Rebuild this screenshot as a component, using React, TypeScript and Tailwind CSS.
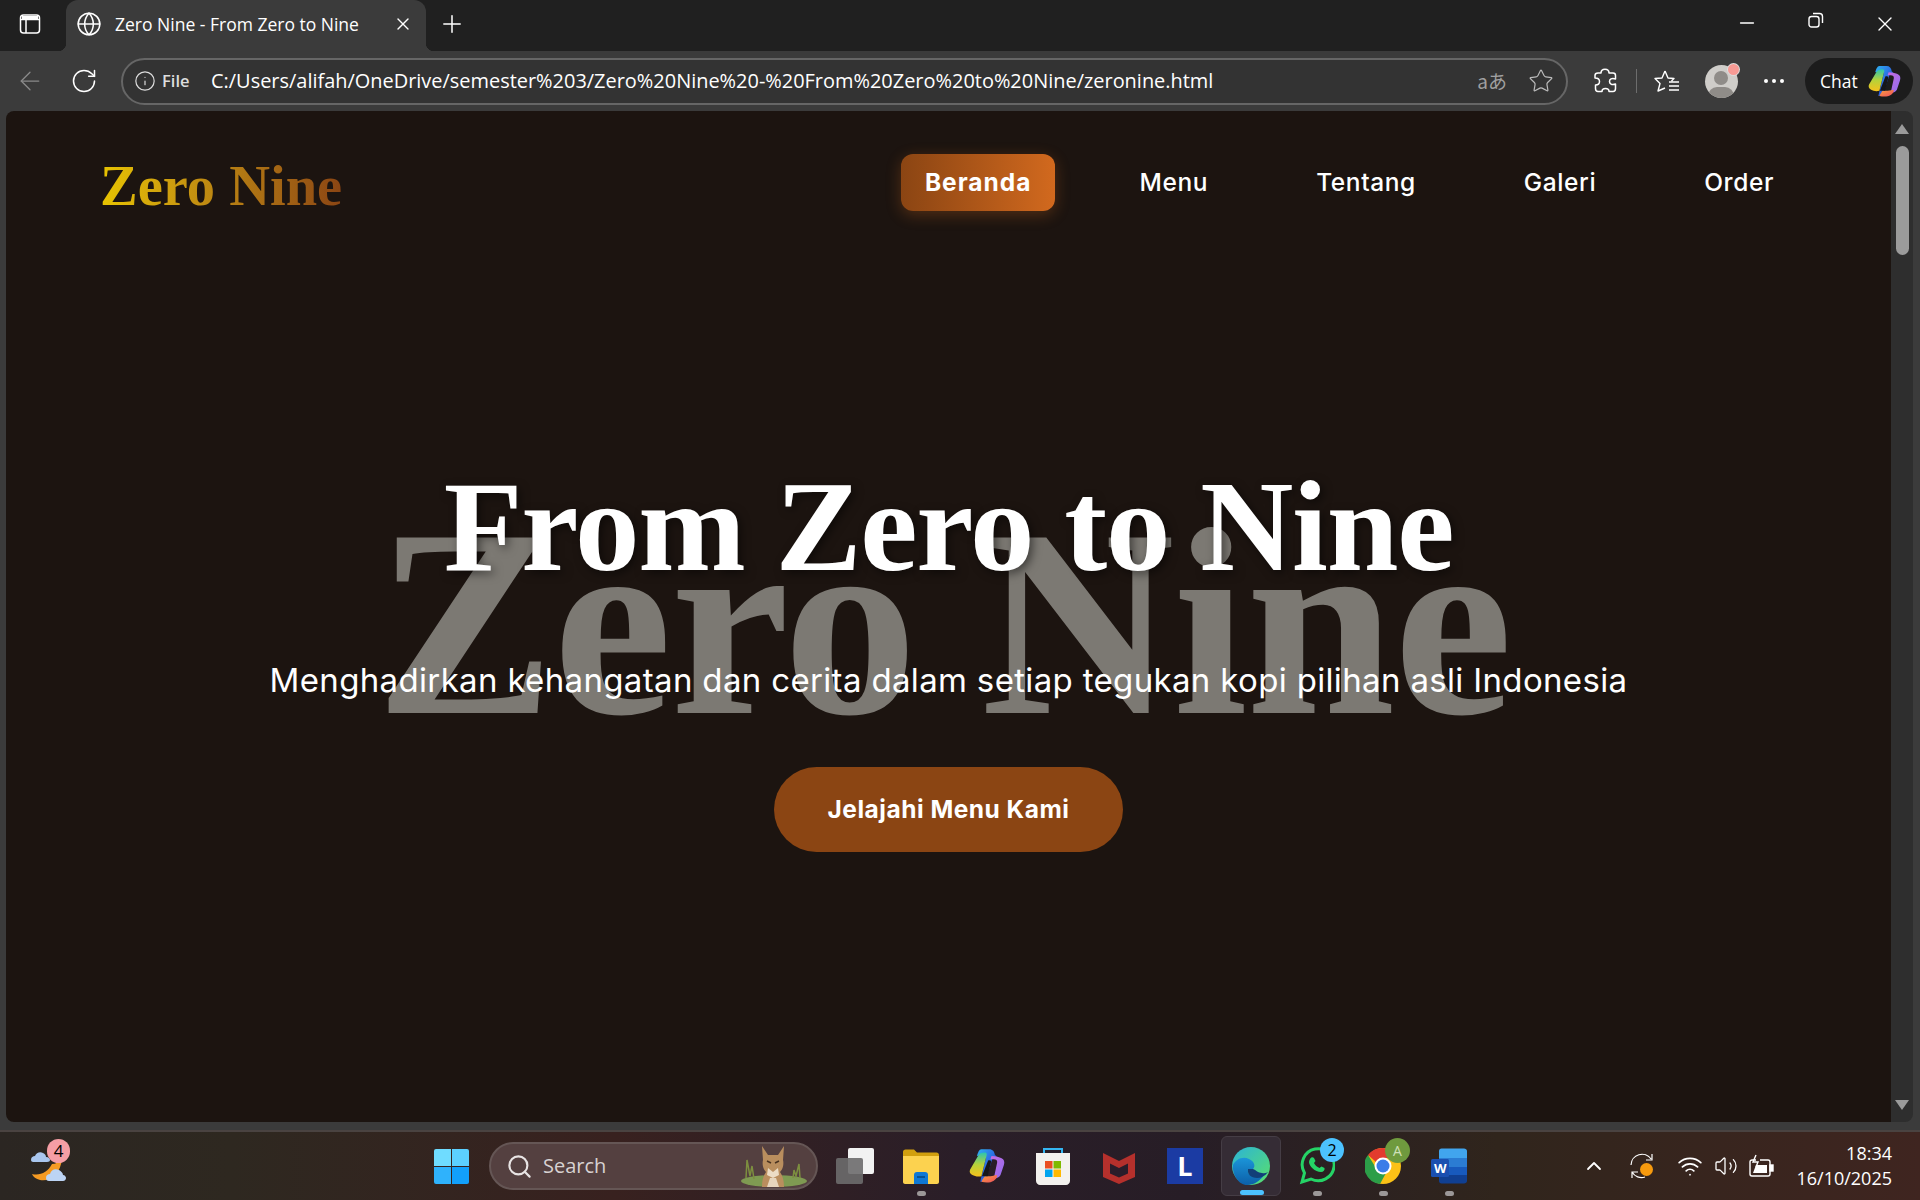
import { ArrowLeft, ChevronUp, Globe, Info, Minus, Plus, RotateCw, Search, Star, Volume2, Wifi, X } from 'lucide-react';

const ui = { fontFamily: '"Open Sans", "Noto Sans", sans-serif' };

function CopilotIcon({ size }: { size: number }) {
  return (
    <svg width={size} height={size} viewBox="0 0 32 32">
      <defs>
        <linearGradient id={`cpa${size}`} x1="0" y1="0" x2="1" y2="1">
          <stop offset="0" stopColor="#2fb4f2" />
          <stop offset="0.55" stopColor="#2b62e0" />
          <stop offset="1" stopColor="#1b2a8c" />
        </linearGradient>
        <linearGradient id={`cpb${size}`} x1="0" y1="0" x2="0" y2="1">
          <stop offset="0" stopColor="#2bc6b0" />
          <stop offset="0.5" stopColor="#b6d23a" />
          <stop offset="1" stopColor="#f6c21b" />
        </linearGradient>
        <linearGradient id={`cpc${size}`} x1="0" y1="0" x2="1" y2="1">
          <stop offset="0" stopColor="#c86be0" />
          <stop offset="1" stopColor="#8e6df0" />
        </linearGradient>
        <linearGradient id={`cpd${size}`} x1="0" y1="0" x2="1" y2="1">
          <stop offset="0" stopColor="#f9a03c" />
          <stop offset="1" stopColor="#ee4d5f" />
        </linearGradient>
      </defs>
      <path d="M11 1h7c3 0 4.500 2 5 5l3 3h-5l-1 3-5 15c-1 2-3 3-5 3l5-21c.5-2-.5-3-2-3l-6 1c1-3 2-6 4-6z" fill={`url(#cpa${size})`} />
      <path d="M8 7c1-2 3-3 6-3 2 0 2 2 1.500 3L11 25c-3 1-6 0-8-1-2-1-3-3-2-5z" fill={`url(#cpb${size})`} />
      <path d="M20 7c4 0 7 1 9 2 2 1 3 3 2 6l-3 9c-1 2-3 3-6 3l3-14c.5-2-1-3-3-3l-3 0z" fill={`url(#cpc${size})`} />
      <path d="M11 30c4 1 8 1 11-1 2-1 3-3 3-5-1 0-4 1-6 1h-5l-2 3z" fill={`url(#cpd${size})`} />
      <path d="M17 11c2-.5 3 0 2.500 2l-3 12h-5z" fill="#16161a" />
    </svg>
  );
}

function TabBar() {
  return (
    <div className="flex h-[51px] items-center bg-[#202020] text-white" style={ui}>
      <div className="flex w-[60px] justify-center pb-[3px]">
        <svg width="22" height="22" viewBox="0 0 22 22" fill="none" stroke="#fff" strokeWidth="1.500">
          <rect x="1.500" y="2" width="19" height="18" rx="3" />
          <path d="M1.500 6.500h19M7 6.500V20" />
          <path d="M3 3h16v3.500H3z" fill="#fff" stroke="none" />
        </svg>
      </div>
      <div className="relative ml-[6px] flex h-full w-[360px] items-center rounded-t-[12px] bg-[#3b3b3b] pb-[3px] pl-[10px]">
        <div className="absolute -left-[8px] bottom-0 h-2 w-2 bg-[radial-gradient(circle_at_0_0,#202020_8px,#3b3b3b_8.500px)]" />
        <div className="absolute -right-[8px] bottom-0 h-2 w-2 bg-[radial-gradient(circle_at_100%_0,#202020_8px,#3b3b3b_8.500px)]" />
        <Globe size={26} strokeWidth={1.400} />
        <span className="ml-[13px] w-[265px] text-[17.500px] whitespace-nowrap">Zero Nine - From Zero to Nine</span>
        <X size={20} strokeWidth={1.600} className="ml-[13px]" />
      </div>
      <div className="flex w-[52px] justify-center pb-[3px]">
        <Plus size={28} strokeWidth={1.300} />
      </div>
      <div className="mr-[1px] ml-auto flex pb-[3px]">
        <div className="flex w-[69px] justify-center"><Minus size={22} strokeWidth={1.500} /></div>
        <div className="flex w-[69px] justify-center">
          <svg width="16" height="16" viewBox="0 0 16 16" fill="none" stroke="#fff" strokeWidth="1.400">
            <rect x="1" y="4.500" width="10" height="10.500" rx="2.500" />
            <path d="M5 1.500h6.500A3 3 0 0 1 14.500 4.500V11" />
          </svg>
        </div>
        <div className="flex w-[69px] justify-center"><X size={24} strokeWidth={1.400} /></div>
      </div>
    </div>
  );
}

function Toolbar() {
  return (
    <div className="flex h-[60px] items-center bg-[#3b3b3b] pl-[3px] text-white" style={ui}>
      <div className="flex w-[54px] justify-center"><ArrowLeft size={30} strokeWidth={1} className="text-[#8a8a8a]" /></div>
      <div className="flex w-[54px] justify-center"><RotateCw size={28} strokeWidth={1.300} /></div>
      <div className="ml-[10px] flex h-[47px] w-[1447px] items-center rounded-full border-2 border-[#666] bg-[#333] pl-[11px]">
        <Info size={22} strokeWidth={1.300} className="text-[#ddd]" />
        <span className="ml-[6px] w-[49px] text-[16.500px] font-semibold text-[#ddd]">File</span>
        <span className="text-[19.950px] whitespace-nowrap">C:/Users/alifah/OneDrive/semester%203/Zero%20Nine%20-%20From%20Zero%20to%20Nine/zeronine.html</span>
        <span className="ml-auto text-[19px] text-[#a0a0a0]" style={{ fontFamily: '"Noto Sans CJK JP", sans-serif' }}>aあ</span>
        <Star size={26} strokeWidth={1.100} className="mr-[12px] ml-[21px] text-[#bbb]" />
      </div>
      <div className="ml-[15px] flex w-[44px] justify-center">
        <svg width="24" height="26" viewBox="0 0 24 26" fill="none" stroke="#fff" strokeWidth="1.500" strokeLinejoin="round">
          <path d="M8 5c0-5 8-5 8 0h4c1.500 0 2.500 1 2.500 2.500V11c-4-1.500-6 .5-6 2.500s2 4 6 2.500v4.500c0 2-1 3-2.500 3h-4c0-4-7-4-7 0H5c-1.500 0-2.500-1-2.500-3V17c3 0 4-2 4-3.500S5.500 10 2 10V7.500C2 6 3.500 5 5 5z" />
        </svg>
      </div>
      <div className="ml-[9px] h-[24px] w-[1px] bg-[#6d6d6d]" />
      <div className="flex w-[60px] justify-center">
        <svg width="26" height="24" viewBox="0 0 26 24" fill="none" stroke="#fff" strokeWidth="1.400" strokeLinejoin="round">
          <path d="M11 2L8 9l-7 .500 5 5-2 7.500 7-3" />
          <path d="M11 2l3 7 6 .500-2.500 2.500M15 13h10M15 17h10M15 21h10" />
        </svg>
      </div>
      <div className="relative flex w-[48px] justify-center">
        <div className="h-[33px] w-[33px] overflow-hidden rounded-full bg-[#cfcdc9]">
          <div className="mx-auto mt-[6px] h-[14px] w-[14px] rounded-full bg-[#8f8c88]" />
          <div className="mx-auto mt-[2px] h-[18px] w-[26px] rounded-full bg-[#8f8c88]" />
        </div>
        <div className="absolute top-[-1px] left-[31px] h-[11px] w-[11px] rounded-full bg-[#f79a94] ring-1 ring-[#ddd]" />
      </div>
      <div className="flex w-[58px] justify-center gap-[4px]">
        <div className="h-[4px] w-[4px] rounded-full bg-white" />
        <div className="h-[4px] w-[4px] rounded-full bg-white" />
        <div className="h-[4px] w-[4px] rounded-full bg-white" />
      </div>
      <div className="ml-[2px] flex h-[46px] w-[108px] items-center rounded-full bg-[#1c1c1c] pl-[15px]">
        <span className="text-[17.500px]">Chat</span>
        <span className="ml-[10px]"><CopilotIcon size={33} /></span>
      </div>
    </div>
  );
}

function Scrollbar() {
  return (
    <div className="flex w-[22px] flex-col items-center rounded-r-[8px] bg-[#2e2e2e]">
      <div className="mt-[13px] h-0 w-0 border-x-[7px] border-b-[10px] border-x-transparent border-b-[#9b9b9b]" />
      <div className="mt-[12px] h-[109px] w-[13px] rounded-full bg-[#9b9b9b]" />
      <div className="mt-auto mb-[12px] h-0 w-0 border-x-[7px] border-t-[10px] border-x-transparent border-t-[#9b9b9b]" />
    </div>
  );
}

function Page() {
  const sans = { fontFamily: 'Inter, "Noto Sans", sans-serif' };
  const serif = { fontFamily: '"Liberation Serif", serif' };
  return (
    <div className="flex min-w-0 flex-1 flex-col overflow-hidden rounded-l-[8px] bg-[#1c1410] text-white">
      <header className="flex items-start justify-between pt-[43px] pr-[93px] pl-[94px]">
        <div className="mt-[4px] bg-linear-to-r from-[#e8c400] to-[#8b4513] bg-clip-text text-[56.500px] leading-[57px] font-bold text-transparent" style={serif}>
          Zero Nine
        </div>
        <nav className="flex gap-[60px] text-[24.500px] font-medium tracking-[0.600px]" style={sans}>
          <a className="rounded-xl bg-linear-to-r from-[#8b4513] to-[#d2691e] px-6 py-[12px] leading-[33px] font-bold tracking-[1px] shadow-[0_4px_15px_rgba(210,105,30,0.3)]">Beranda</a>
          <a className="px-6 py-[12px] leading-[33px]">Menu</a>
          <a className="px-6 py-[12px] leading-[33px]">Tentang</a>
          <a className="px-6 py-[12px] leading-[33px]">Galeri</a>
          <a className="px-6 py-[12px] leading-[33px]">Order</a>
        </nav>
      </header>
      <section className="relative flex flex-1 flex-col items-center pt-[237px]">
        <div className="absolute top-[258px] left-0 w-full pr-[10px] text-center text-[268px] leading-[300px] font-bold tracking-[-1.500px] whitespace-nowrap text-[#7c7973]" style={serif}>
          Zero Nine
        </div>
        <h1 className="relative text-[129px] leading-[150px] font-bold tracking-[-1.250px] [text-shadow:3px_3px_10px_rgba(0,0,0,0.5)]" style={serif}>
          From Zero to Nine
        </h1>
        <p className="relative mt-[54px] text-[33px] leading-[48px] tracking-[0.340px]" style={sans}>
          Menghadirkan kehangatan dan cerita dalam setiap tegukan kopi pilihan asli Indonesia
        </p>
        <button className="relative mt-[63px] flex h-[85px] w-[349px] items-center justify-center rounded-full bg-[#8b4513] text-[24.500px] font-bold tracking-[0.500px]" style={sans}>
          Jelajahi Menu Kami
        </button>
      </section>
    </div>
  );
}

function Folder() {
  return (
    <svg width="36" height="36" viewBox="0 0 36 36">
      <path d="M0 4c0-1.500 1-2.500 2.500-2.500H11l3 3h19.500c1.500 0 2.500 1 2.500 2.500v3H0z" fill="#d19f0e" />
      <path d="M0 8h36v26c0 1-1 2-2 2H2c-1 0-2-1-2-2z" fill="#fcd24f" />
      <path d="M11 36v-9c0-2 1-3 3-3h8c2 0 3 1 3 3v9z" fill="#0f78d4" />
      <path d="M14 29h8" stroke="#06467e" strokeWidth="1.500" />
    </svg>
  );
}

function Store() {
  return (
    <svg width="36" height="40" viewBox="0 0 36 40">
      <path d="M9 8V3h18v5" fill="none" stroke="#35b6f2" strokeWidth="2" />
      <path d="M1 7h34v28c0 2-2 4-4 4H5c-2 0-4-2-4-4z" fill="#f3f1ee" />
      <rect x="10" y="15" width="7.500" height="7.500" fill="#ea4e22" />
      <rect x="18.500" y="15" width="7.500" height="7.500" fill="#7fba00" />
      <rect x="10" y="23.500" width="7.500" height="7.500" fill="#00a4ef" />
      <rect x="18.500" y="23.500" width="7.500" height="7.500" fill="#ffb900" />
    </svg>
  );
}

function McAfee() {
  return (
    <svg width="32" height="36" viewBox="0 0 32 36">
      <path d="M0 5l16 8 16-8v24l-16 7-16-7z" fill="#b5302c" />
      <path d="M7 15.500l9 4.500 9-4.500v10l-9 4-9-4z" fill="#2a1d2a" />
    </svg>
  );
}

function EdgeIcon() {
  return (
    <svg width="38" height="38" viewBox="0 0 38 38">
      <defs>
        <linearGradient id="edgeA" x1="0" y1="0" x2="1" y2="1">
          <stop offset="0" stopColor="#2bb3d8" />
          <stop offset="1" stopColor="#5ae06b" />
        </linearGradient>
        <linearGradient id="edgeB" x1="0" y1="0" x2="0" y2="1">
          <stop offset="0" stopColor="#1b95d9" />
          <stop offset="1" stopColor="#0c5fa8" />
        </linearGradient>
      </defs>
      <circle cx="19" cy="19" r="19" fill="url(#edgeA)" />
      <path d="M1 18c3-6 10-9 16-6 5 2 7 7 4 10h-5c-1 4 2 7 7 8 3 .500 6 0 9-2-4 6-10 10-17 10C7 38 0 28 1 18z" fill="url(#edgeB)" />
      <path d="M16 22c-1 5 3 9 9 9 4 0 8-2 11-6-1 0-2 2-6 1-4 0-6-3-9-4z" fill="#123f78" />
    </svg>
  );
}

function WhatsApp() {
  return (
    <svg width="36" height="38" viewBox="0 0 36 38">
      <path d="M3 35l2.500-9A16 16 0 1 1 12 32z" fill="none" stroke="#25d366" strokeWidth="3" />
      <path d="M11 12c1-2 3-2 4-1l1.500 3-1.500 2c1 2 3 4 5.500 5l2-1.500 3 1.500c.5 2-1 4-3.500 4-6 0-12-6-12-10 0-1 .5-2 1-3z" fill="#25d366" />
    </svg>
  );
}

function Chrome() {
  return (
    <svg width="36" height="38" viewBox="0 0 36 38">
      <circle cx="18" cy="19" r="18" fill="#fbc116" />
      <path d="M18 1A18 18 0 0 1 34 11H18a8 8 0 0 0-7 4L3 8A18 18 0 0 1 18 1z" fill="#e33b2e" />
      <path d="M3 8l8 13a8 8 0 0 0 10 5l-6 11A18 18 0 0 1 3 8z" fill="#2c9e48" />
      <circle cx="18" cy="19" r="8.500" fill="#fff" />
      <circle cx="18" cy="19" r="6.500" fill="#3b7de8" />
    </svg>
  );
}

function Word() {
  return (
    <svg width="36" height="36" viewBox="0 0 36 36">
      <path d="M8 3c0-1.500 1-2.500 2.500-2.500H33c1.500 0 3 1 3 2.500v7H8z" fill="#41a5ee" />
      <rect x="8" y="10" width="28" height="9" fill="#2b7cd3" />
      <rect x="8" y="19" width="28" height="8" fill="#185abd" />
      <path d="M8 27h28v6c0 1.500-1.500 2.500-3 2.500H10.500C9 35.500 8 34.500 8 33z" fill="#103f91" />
      <rect x="0" y="11" width="18" height="18" rx="1.500" fill="#1a4fb0" />
    </svg>
  );
}

function TaskIcon({ children, dot, badge, active }: { children: React.ReactNode; dot?: boolean; badge?: React.ReactNode; active?: boolean }) {
  return (
    <div className={`relative mx-[3px] flex h-[60px] w-[60px] items-center justify-center rounded-[6px] ${active ? 'border border-[#453d45] bg-[#352c35]' : ''}`}>
      {children}
      {badge}
      {dot && <div className="absolute bottom-[0px] left-[26px] h-[5px] w-[9px] rounded-full bg-[#9c9898]" />}
      {active && <div className="absolute bottom-[0px] left-[18px] h-[5px] w-[24px] rounded-full bg-[#4cc2ff]" />}
    </div>
  );
}

function Lynx() {
  return (
    <svg width="68" height="44" viewBox="0 0 68 44">
      <ellipse cx="34" cy="37" rx="33" ry="6" fill="#7f9a52" />
      <path d="M6 34l1-18 3 16 2-10 2 13M60 34l-1-14-3 12-2-6-1 8" fill="none" stroke="#7d8f3f" strokeWidth="1.500" />
      <path d="M22 43c0-8 2-12 4-15-3-3-4-8-3-12l-1-14 6 9h10l6-9-1 14c1 4 0 9-3 12 2 3 4 7 4 15z" fill="#b98e5e" />
      <path d="M27 17l4 2M39 17l-4 2" stroke="#4a3320" strokeWidth="1.500" />
      <path d="M28 24l5 4 5-4 1 7-6 3-6-3z" fill="#ecdcc4" />
      <path d="M27 43l3-9h6l3 9z" fill="#e6d5bc" />
    </svg>
  );
}

function Taskbar() {
  return (
    <div className="flex h-[70px] items-center border-t-2 border-[#4a4341] bg-[linear-gradient(90deg,#2b2622_0%,#2e2820_12%,#38211f_32%,#2a1e28_50%,#271d26_62%,#30251c_78%,#3f2520_100%)] text-white" style={ui}>
      <div className="relative ml-[30px] h-[40px] w-[40px]">
        <svg width="40" height="44" viewBox="0 0 40 44" className="absolute top-[-2px] left-0">
          <path d="M22 20c4 0 7-2 10-6-1 16-12 24-22 22-4-1-7-3-8-6 8 2 16-2 20-10z" fill="#f59a23" />
          <path d="M1 16c0-3 2-4 4-4 1-3 5-5 8-3 2 1 3 2 3 4 3 0 4 2 4 3s-1 2-3 2H3c-1 0-2-1-2-2z" fill="#a9c6ee" />
          <path d="M16 34c0-3 2-4 4-4 1-4 5-6 9-4 2 1 4 3 4 5 2 0 3 2 3 3s-1 3-3 3H19c-2 0-3-1-3-3z" fill="#bcd4f4" />
        </svg>
        <div className="absolute -top-[7px] left-[17px] flex h-[24px] w-[23px] items-center justify-center rounded-full bg-[#f59ea5] text-[17px] text-black">4</div>
      </div>
      <div className="ml-[363px] flex h-[36px] w-[36px] items-center justify-center">
        <div className="grid grid-cols-2 gap-[1px]">
          <div className="h-[17px] w-[17px] rounded-tl-[2px] bg-[#6fdcff]" />
          <div className="h-[17px] w-[17px] rounded-tr-[2px] bg-[#5cd0ff]" />
          <div className="h-[17px] w-[17px] rounded-bl-[2px] bg-[#2fb2fc]" />
          <div className="h-[17px] w-[17px] rounded-br-[2px] bg-[#12a0fb]" />
        </div>
      </div>
      <div className="ml-[20px] flex h-[48px] w-[329px] items-center rounded-full border-2 border-[#655655] bg-[#544040] pl-[15px]">
        <Search size={27} strokeWidth={1.900} className="text-[#e8e4e4]" />
        <span className="ml-[10px] text-[20px] text-[#d8d2d2]">Search</span>
        <span className="mr-[8px] ml-auto"><Lynx /></span>
      </div>
      <div className="ml-[4px] flex">
        <TaskIcon>
          <div className="relative h-[36px] w-[38px]">
            <div className="absolute top-0 right-0 h-[26px] w-[26px] rounded-[2px] bg-[#f2f2f2]" />
            <div className="absolute bottom-0 left-0 h-[26px] w-[27px] rounded-[2px] bg-[#6d6b6d]/90" />
          </div>
        </TaskIcon>
        <TaskIcon dot><Folder /></TaskIcon>
        <TaskIcon><CopilotIcon size={36} /></TaskIcon>
        <TaskIcon><Store /></TaskIcon>
        <TaskIcon><McAfee /></TaskIcon>
        <TaskIcon>
          <div className="relative flex h-[36px] w-[36px] items-center justify-center bg-[#1b3ba3] text-[27px] font-bold">L</div>
        </TaskIcon>
        <TaskIcon active><EdgeIcon /></TaskIcon>
        <TaskIcon dot badge={<div className="absolute top-[2px] left-[33px] flex h-[24px] w-[24px] items-center justify-center rounded-full bg-[#4cc2ff] text-[16px] text-black">2</div>}>
          <WhatsApp />
        </TaskIcon>
        <TaskIcon dot badge={<div className="absolute top-[2px] left-[32px] flex h-[25px] w-[25px] items-center justify-center rounded-full bg-[#6f9a3e] text-[14px] text-[#cfe0b8]">A</div>}>
          <Chrome />
        </TaskIcon>
        <TaskIcon dot>
          <div className="relative">
            <Word />
            <span className="absolute top-[11px] left-[3px] text-[13px] font-bold">W</span>
          </div>
        </TaskIcon>
      </div>
      <div className="ml-[100px] flex w-[24px] justify-center"><ChevronUp size={26} strokeWidth={1.800} /></div>
      <div className="relative ml-[12px] flex w-[48px] justify-center">
        <svg width="26" height="26" viewBox="0 0 26 26" fill="none" stroke="#fff" strokeWidth="1.200">
          <path d="M2 12A11 11 0 0 1 22 6M23 1v6h-6M3 19a11 11 0 0 0 13 5M3 25v-6h6" />
        </svg>
        <div className="absolute top-[10px] left-[22px] h-[13px] w-[13px] rounded-full bg-[#f79a0e]" />
      </div>
      <div className="flex w-[48px] justify-center"><Wifi size={26} strokeWidth={1.600} /></div>
      <div className="flex w-[24px] justify-center"><Volume2 size={26} strokeWidth={1.300} /></div>
      <div className="ml-[6px] flex w-[36px] justify-center">
        <svg width="26" height="24" viewBox="0 0 26 24" fill="none" stroke="#fff" strokeWidth="1.400">
          <path d="M7 6H3a2 2 0 0 0-2 2v12a2 2 0 0 0 2 2h16a2 2 0 0 0 2-2V8a2 2 0 0 0-2-2h-8" />
          <rect x="21" y="11" width="3" height="6" fill="#fff" />
          <path d="M4 19l3-8h11v8z" fill="#fff" stroke="none" />
          <path d="M7 1L4 8h5l-2 5" />
        </svg>
      </div>
      <div className="mr-[28px] ml-auto text-right text-[18px] leading-[25px]">
        <div>18:34</div>
        <div>16/10/2025</div>
      </div>
    </div>
  );
}

export default function App() {
  return (
    <div className="flex h-[1200px] w-[1920px] flex-col overflow-hidden bg-[#3b3b3b]">
      <TabBar />
      <Toolbar />
      <div className="flex min-h-0 flex-1 pr-[7px] pb-[8px] pl-[6px]">
        <Page />
        <Scrollbar />
      </div>
      <Taskbar />
    </div>
  );
}
